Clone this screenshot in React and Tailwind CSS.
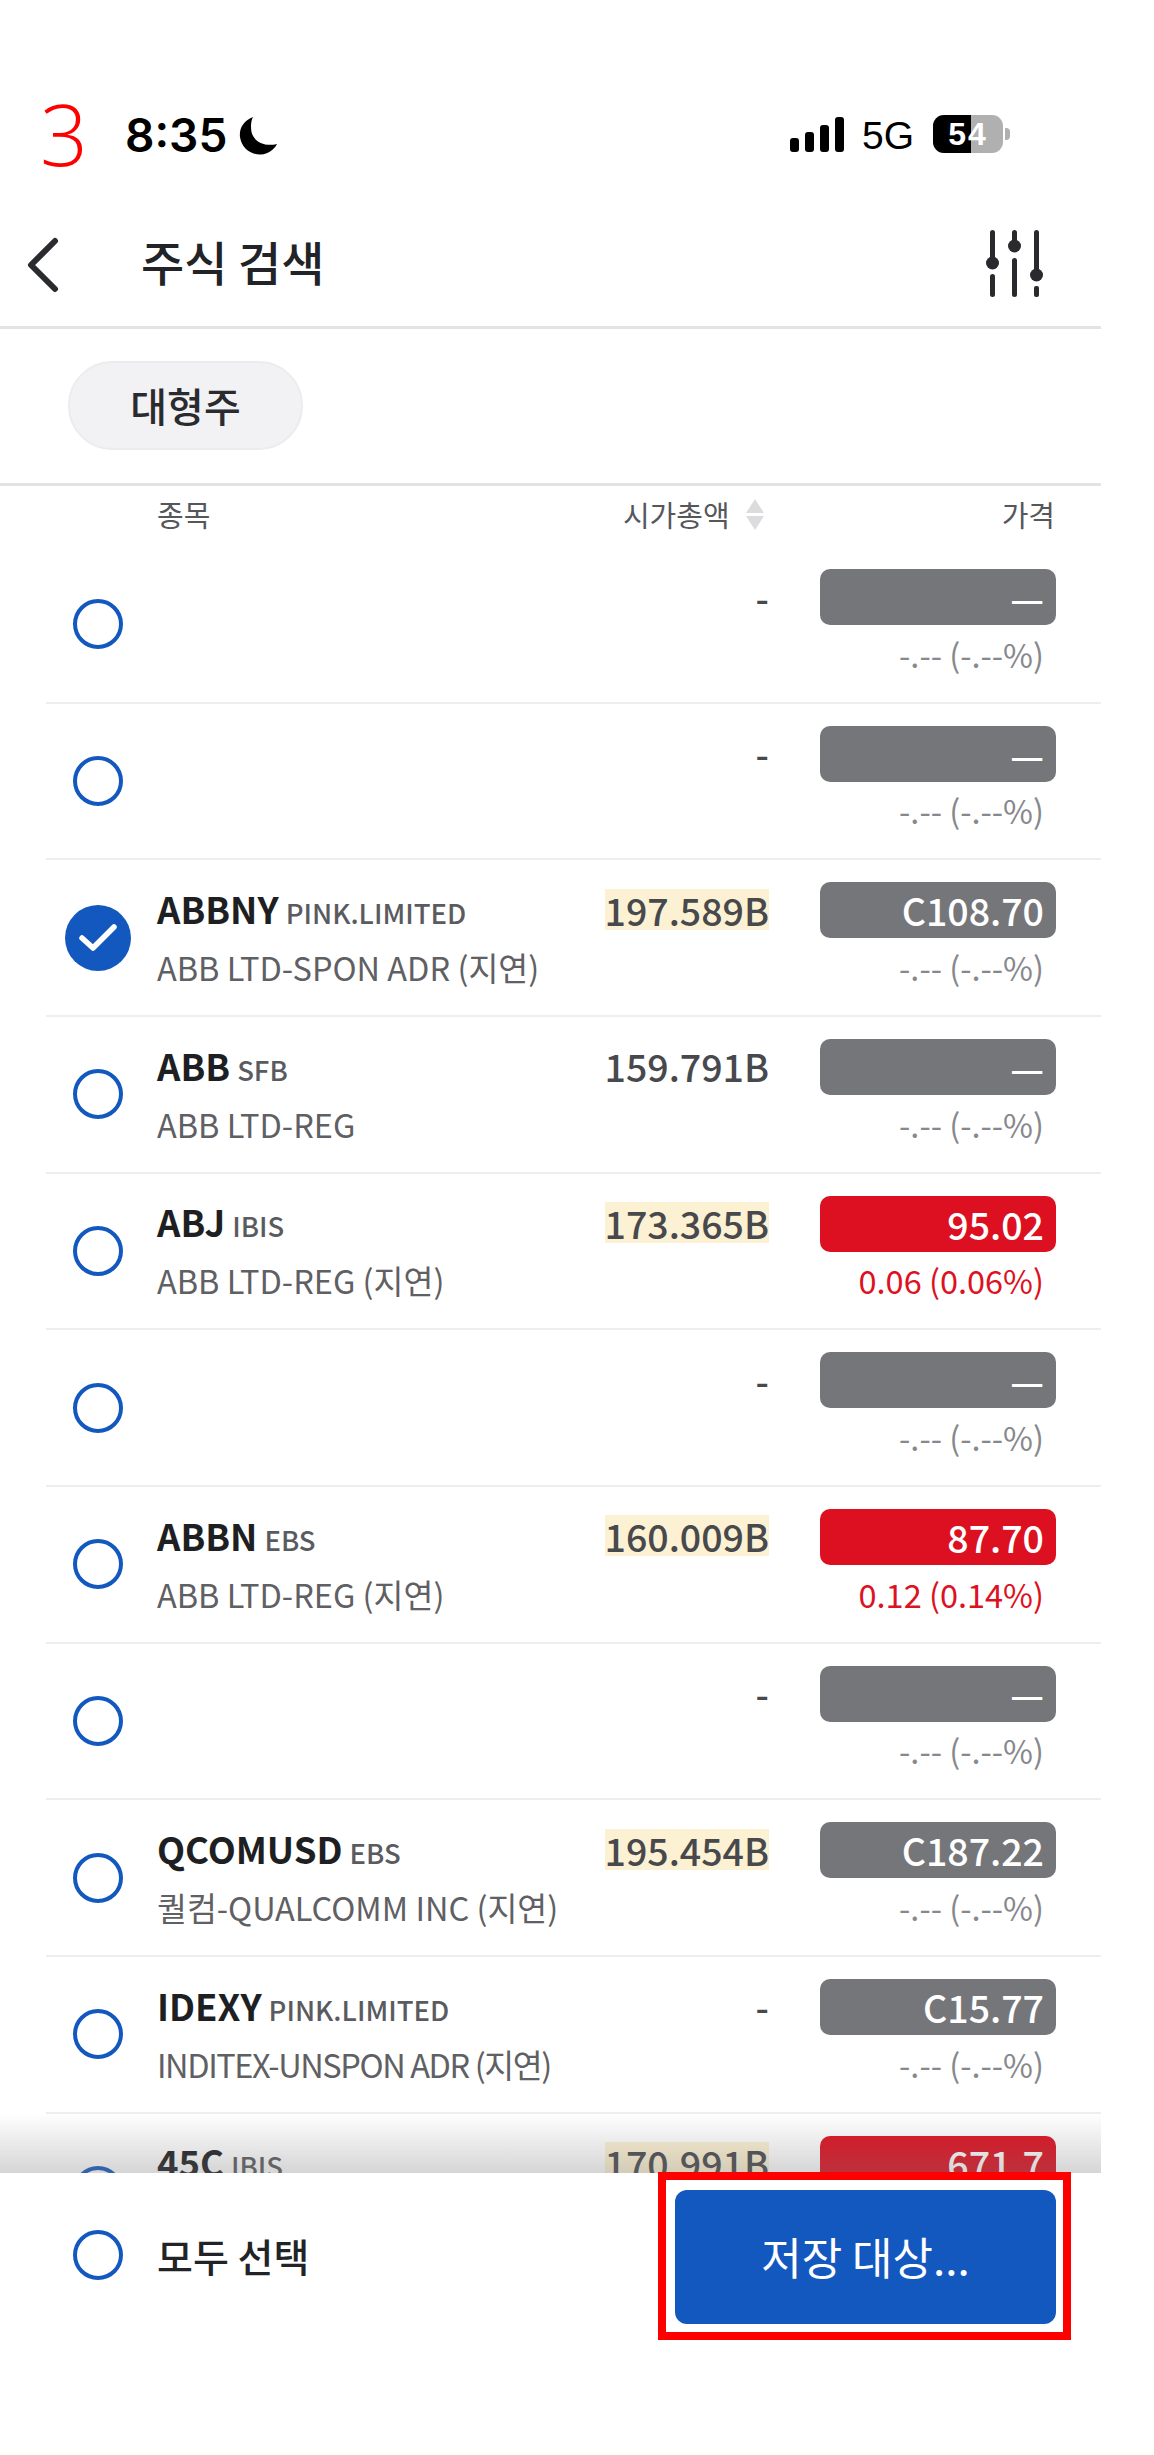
const FONT = { fontFamily: '"Noto Sans CJK KR", "Noto Sans", sans-serif' };

const rows = [
  { dash: true },
  { dash: true },
  { sym: 'ABBNY', ex: 'PINK.LIMITED', name: 'ABB LTD-SPON ADR (지연)', cap: '197.589B', hl: true, price: 'C108.70', checked: true },
  { sym: 'ABB', ex: 'SFB', name: 'ABB LTD-REG', cap: '159.791B', price: '—' },
  { sym: 'ABJ', ex: 'IBIS', name: 'ABB LTD-REG (지연)', cap: '173.365B', hl: true, price: '95.02', red: true, sub: '0.06 (0.06%)' },
  { dash: true },
  { sym: 'ABBN', ex: 'EBS', name: 'ABB LTD-REG (지연)', cap: '160.009B', hl: true, price: '87.70', red: true, sub: '0.12 (0.14%)' },
  { dash: true },
  { sym: 'QCOMUSD', ex: 'EBS', name: '퀄컴-QUALCOMM INC (지연)', cap: '195.454B', hl: true, price: 'C187.22' },
  { sym: 'IDEXY', ex: 'PINK.LIMITED', name: 'INDITEX-UNSPON ADR (지연)', tight: true, cap: '-', price: 'C15.77' },
  { sym: '45C', ex: 'IBIS', cap: '170.991B', hl: true, price: '671.7', red: true, last: true },
];

function Radio({ checked }) {
  if (checked) {
    return (
      <div className="flex h-[66px] w-[66px] items-center justify-center rounded-full bg-[#1358bf]">
        <svg width="40" height="30" viewBox="0 0 40 30" fill="none">
          <path d="M4 15 L15 25 L36 4" stroke="#fff" strokeWidth="5.5" strokeLinecap="round" strokeLinejoin="round" />
        </svg>
      </div>
    );
  }
  return <div className="h-[50px] w-[50px] rounded-full border-[4px] border-[#1358bf]" />;
}

function Row({ r }) {
  const sym = r.dash ? {} : r;
  const cap = r.dash ? '-' : r.cap;
  const price = r.dash ? '—' : r.price;
  const sub = r.sub || '-.-- (-.--%)';
  return (
    <div className="relative ml-[46px] flex h-[156.67px] shrink-0 flex-col border-b-2 border-[#eeeeef]">
      <div className="absolute left-[52px] top-0 flex h-full w-[0px] items-center justify-center">
        <div className="flex w-[66px] shrink-0 justify-center"><Radio checked={r.checked} /></div>
      </div>
      <div className="ml-[111px] mr-[45px] flex pt-[22px]">
        <div className="flex h-[54px] min-w-0 flex-1 items-center">
          {sym.sym && (
            <div className="flex items-baseline whitespace-nowrap">
              <span className="text-[36.5px] font-semibold text-[#1e1f23]">{sym.sym}</span>
              <span className="ml-[7px] text-[27.5px] font-medium text-[#5a5b5f]">{sym.ex}</span>
            </div>
          )}
        </div>
        <div className="flex h-[54px] w-[213px] shrink-0 items-center justify-end">
          <span className={`text-[37.500px] font-medium leading-[41px] text-[#48494d] ${r.hl ? 'bg-[#fdf1d3]' : ''}`}>{cap}</span>
        </div>
        <div className={`ml-[51px] flex h-[56px] w-[236px] shrink-0 items-center justify-end rounded-[10px] pr-[12px] text-[37.500px] font-medium text-white ${r.red ? 'bg-[#dc1020]' : 'bg-[#75767a]'}`}>
          {price}
        </div>
      </div>
      {!r.last && (
        <div className="ml-[111px] mr-[57px] mt-[7px] flex h-[44px] items-center justify-between whitespace-nowrap text-[32.5px]">
          <span className={`text-[#5f6064] ${r.tight ? 'tracking-[-1.4px]' : ''}`}>{sym.name || ''}</span>
          <span className={r.red ? 'text-[#dd1122]' : 'text-[#87888c]'}>{sub}</span>
        </div>
      )}
    </div>
  );
}

export default function App() {
  return (
    <div className="relative flex h-[2455px] w-full flex-col overflow-hidden bg-white" style={FONT}>
      <div className="relative flex h-[2173px] w-[1101px] shrink-0 flex-col overflow-hidden">
        {/* status bar */}
        <div className="relative h-[215px] shrink-0">
          <div className="absolute left-[40px] top-[81px] text-[84px] font-light leading-[106px] text-[#ff0000]" style={{ fontFamily: '"Open Sans", sans-serif' }}>3</div>
          <div className="absolute left-[125px] top-[108px] flex items-center">
            <span className="text-[46px] font-semibold leading-[54px] text-black" style={{ fontFamily: '"Inter", sans-serif' }}>8:35</span>
          </div>
          <svg className="absolute left-[238px] top-[116px]" width="40" height="40" viewBox="0 0 40 40">
            <path d="M15 1 C5 5 1 13 2 21 C3.500 32 13 39 23 38.500 C30 38 36 34 39 28 C27 31 16 26 13.500 16 C12.500 10 13 5 15 1 Z" fill="#000" />
          </svg>
          {/* signal */}
          <div className="absolute left-[790px] top-[117px] flex h-[35px] items-end gap-[6px]">
            <div className="h-[14px] w-[9px] rounded-[3px] bg-black" />
            <div className="h-[20px] w-[9px] rounded-[3px] bg-black" />
            <div className="h-[27px] w-[9px] rounded-[3px] bg-black" />
            <div className="h-[35px] w-[9px] rounded-[3px] bg-black" />
          </div>
          <div className="absolute left-[862px] top-[112px] text-[39px] font-normal leading-[48px] text-black" style={{ fontFamily: '"Liberation Sans", sans-serif' }}>5G</div>
          {/* battery */}
          <div className="absolute left-[933px] top-[115px] flex h-[38px] w-[70px] overflow-hidden rounded-[11px] bg-[#b0b0b0]">
            <div className="h-full w-[38px] bg-black" />
            <div className="absolute inset-0 flex items-center justify-center text-[32px] font-bold tracking-[2px] text-white" style={{ fontFamily: '"Liberation Sans", sans-serif' }}>54</div>
          </div>
          <div className="absolute left-[1005px] top-[128px] h-[12px] w-[5px] rounded-r-[4px] bg-[#b0b0b0]" />
        </div>
        {/* nav */}
        <div className="relative flex h-[114px] shrink-0 items-start border-b-[3px] border-[#e3e3e5]">
          <svg className="absolute left-[25px] top-[22px]" width="36" height="56" viewBox="0 0 36 56" fill="none">
            <path d="M30 4 L6 28 L30 52" stroke="#2a2b2f" strokeWidth="6" strokeLinecap="round" strokeLinejoin="round" />
          </svg>
          <div className="absolute left-[141px] top-[16px] text-[47px] font-medium leading-[60px] text-[#222327]">주식 검색</div>
          <svg className="absolute left-[984px] top-[15px]" width="60" height="68" viewBox="0 0 60 68" fill="#2a2a2e">
            <rect x="6" y="0" width="5" height="32" rx="2.500" />
            <circle cx="8.500" cy="33" r="6.500" />
            <rect x="6" y="44" width="5" height="23" rx="2.500" />
            <rect x="28" y="0" width="5" height="16" rx="2.500" />
            <circle cx="30.500" cy="16" r="6.500" />
            <rect x="28" y="28" width="5" height="39" rx="2.500" />
            <rect x="50" y="0" width="5" height="45" rx="2.500" />
            <circle cx="52.500" cy="45" r="6.500" />
            <rect x="50" y="56" width="5" height="11" rx="2" />
          </svg>
        </div>
        {/* chip row */}
        <div className="flex h-[157px] shrink-0 items-center border-b-[3px] border-[#e3e3e5] pl-[68px] pb-[1px]">
          <div className="flex h-[89px] w-[235px] items-center justify-center rounded-[44px] border-2 border-[#ececee] bg-[#f2f2f4] pb-[2px] text-[40px] font-medium text-[#2a2b2f]">대형주</div>
        </div>
        {/* column header */}
        <div className="flex h-[61px] shrink-0 items-start pt-[7px] pl-[157px] pr-[46px] text-[29px] leading-[42px] text-[#56575b]">
          <span className="flex-1">종목</span>
          <span>시가총액</span>
          <svg className="ml-[15px] mr-[237px] mt-[6px]" width="20" height="32" viewBox="0 0 20 32" fill="#dcdcde">
            <path d="M10 0 L19 14 L1 14 Z" />
            <path d="M10 31 L19 17 L1 17 Z" />
          </svg>
          <span>가격</span>
        </div>
        {/* list */}
        <div className="flex flex-col">
          {rows.map((r, i) => <Row key={i} r={r} />)}
        </div>
        <div className="absolute inset-x-0 bottom-0 h-[60px] bg-gradient-to-b from-[#7a7a7a00] to-[#7a7a7a50]" />
      </div>
      {/* footer */}
      <div className="relative flex h-[168px] shrink-0 items-start bg-white">
        <div className="ml-[73px] mt-[57px]"><Radio /></div>
        <div className="ml-[34px] mt-[52px] text-[39px] font-medium leading-[60px] text-[#222327]">모두 선택</div>
        <div className="absolute left-[675px] top-[17px] flex h-[134px] w-[381px] items-center justify-center rounded-[12px] bg-[#1358bf] pb-[3px] text-[44px] text-white">저장 대상...</div>
      </div>
      {/* annotation */}
      <div className="absolute left-[658px] top-[2172px] h-[168px] w-[413px] border-[8px] border-[#ff0000]" />
    </div>
  );
}
